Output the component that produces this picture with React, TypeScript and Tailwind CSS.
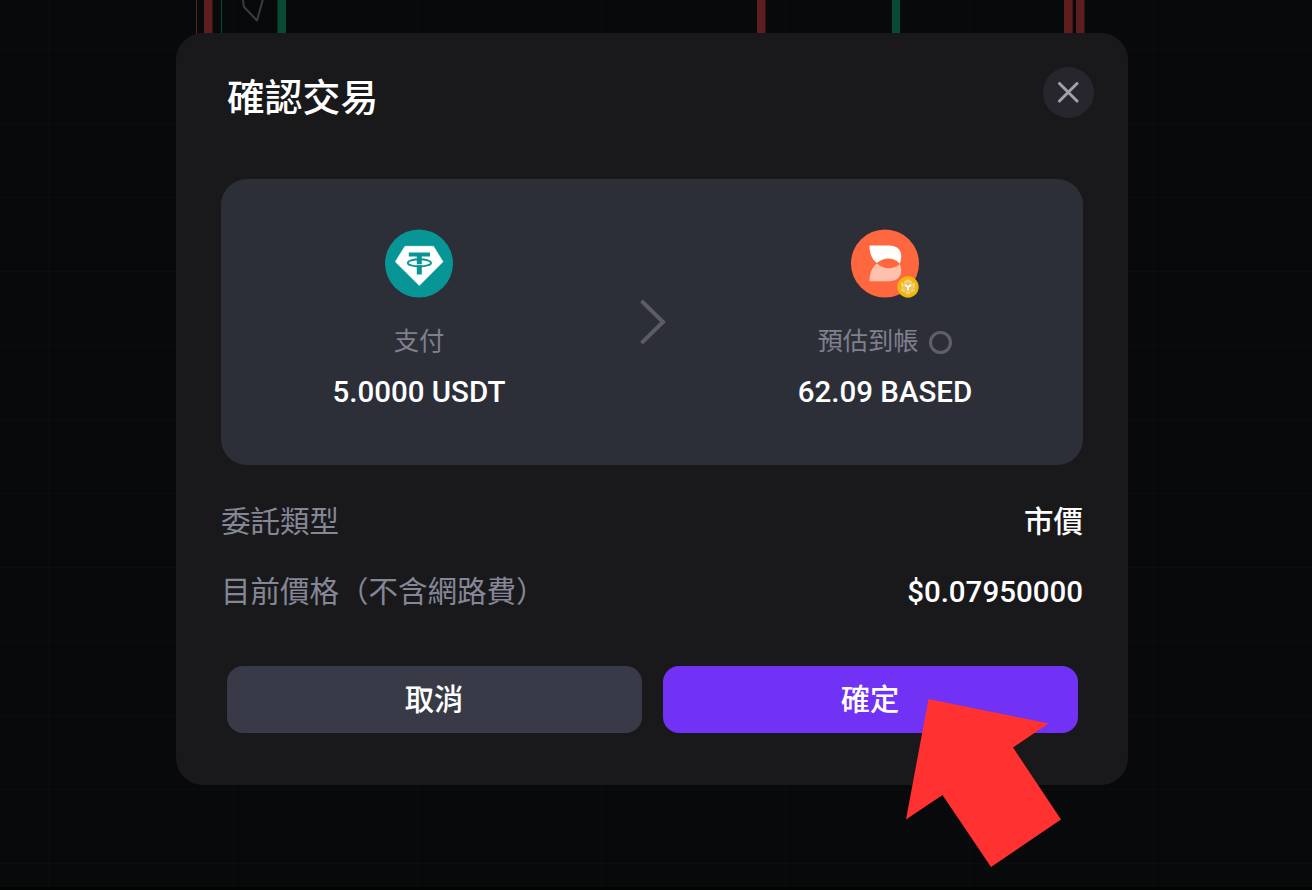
import type { ReactNode } from "react";

const verticalLines = [48, 233, 417, 601, 785, 969, 1153];
const horizontalLines = [49, 123, 197, 271, 345, 419, 493, 567, 641, 715, 789, 863];

function ChartBackdrop() {
  return (
    <svg className="absolute inset-0" width="1312" height="890" viewBox="0 0 1312 890" aria-hidden="true">
      <g fill="#0b0d0f">
        {verticalLines.map((x) => (
          <rect key={x} x={x} y="0" width="1" height="887" />
        ))}
        {horizontalLines.map((y) => (
          <rect key={y} x="0" y={y} width="1312" height="1" />
        ))}
      </g>
      <rect x="0" y="887" width="1312" height="3" fill="#020303" />
      <g fill="#5e1d1e">
        <rect x="196" y="0" width="1" height="60" />
        <rect x="204" y="0" width="8.5" height="60" />
        <rect x="757" y="0" width="8.5" height="60" />
        <rect x="1064" y="0" width="8.7" height="60" />
        <rect x="1076" y="0" width="8.5" height="60" />
      </g>
      <g fill="#074b34">
        <rect x="221" y="0" width="1" height="60" />
        <rect x="277.5" y="0" width="8.5" height="60" />
        <rect x="892" y="0" width="8" height="60" />
      </g>
      <path d="M242.5 -3 L244 7 L257 20.5 L263 -1" fill="none" stroke="#3a3b45" strokeWidth="2" strokeLinejoin="round" />
    </svg>
  );
}

function TetherIcon() {
  return (
    <svg width="68" height="69" viewBox="0 -0.5 68 69" aria-hidden="true">
      <circle cx="34" cy="34" r="34" fill="#079595" />
      <path d="M20 16.8 H48.5 L58 32.2 L34.3 56 L10.3 32.2 Z" fill="#fff" strokeLinejoin="round" stroke="#fff" strokeWidth="0.6" />
      <path d="M23.8 23 H45 V27 H36.8 V45 H31.8 V27 H23.8 Z" fill="#079595" />
      <ellipse cx="34.4" cy="33.4" rx="11.6" ry="3.6" fill="none" stroke="#079595" strokeWidth="1.9" />
      <path d="M31.8 35.1 H36.8" stroke="#fff" strokeWidth="0.8" />
    </svg>
  );
}

function BasedIcon() {
  return (
    <svg width="68" height="69" viewBox="0 -0.5 68 69" aria-hidden="true">
      <circle cx="34" cy="34" r="34" fill="#ff683e" />
      <path d="M18.5 16 H38 C45.5 16 50.5 20 50.2 27 C50 30 49.5 32.2 48.8 34.2 C43 27.5 32.5 27.5 26 33.6 C21 30 18.5 24 18.5 16 Z" fill="#fff" />
      <path d="M18.5 51.8 C18.5 44 21 37.5 26 34 C32.5 40.2 42.5 40.2 48.8 34.4 C49.8 36.5 50.2 39 50.2 41.5 C50 48 45.5 51.8 38 51.8 Z" fill="#ffc1ae" />
    </svg>
  );
}

function NetworkBadge() {
  return (
    <svg className="absolute left-[46px] top-[47px]" width="22" height="22" viewBox="0 0 22 22" aria-hidden="true">
      <circle cx="11" cy="11" r="10.7" fill="#edb70d" />
      <path d="M11 4.6 L16.7 7.8 V14.2 L11 17.4 L5.3 14.2 V7.8 Z" fill="#f3c04f" stroke="#f8cd82" strokeWidth="2.4" strokeDasharray="4.6 1.2" />
      <path d="M7.8 8.8 L11 11 L14.2 8.8 M11 11 V14.2" fill="none" stroke="#fff" strokeWidth="2" />
    </svg>
  );
}

function Asset({ icon, label, amount }: { icon: ReactNode; label: ReactNode; amount: string }) {
  return (
    <div className="flex w-[396px] flex-col items-center pt-[50.5px]">
      <div className="relative h-[68px] w-[68px]">{icon}</div>
      <div className="mt-[25.5px] flex h-[38px] items-center text-[25.3px] leading-[38px] text-[#7f808e]">{label}</div>
      <div className="mt-[9px] whitespace-nowrap text-[29.5px] font-medium leading-[44px] text-white">{amount}</div>
    </div>
  );
}

function DetailRow({ label, value }: { label: string; value: string }) {
  return (
    <div className="flex h-[44px] items-center justify-between text-[29.5px] leading-[44px]">
      <span className="text-[#858796]">{label}</span>
      <span className="font-medium text-white">{value}</span>
    </div>
  );
}

export default function App() {
  return (
    <div className="relative flex h-[890px] w-[1312px] items-start overflow-hidden bg-[#08090b] pl-[176px] pt-[33px] font-[Roboto,'Noto_Sans_CJK_TC',sans-serif]">
      <ChartBackdrop />
      <main className="relative flex h-[752px] w-[952px] flex-col rounded-[27px] bg-[#19191b] px-[45px]">
        <header className="flex h-[145.5px] items-start justify-between pl-[6px]">
          <h1 className="mt-[37px] text-[37.8px] font-medium leading-[56px] text-white">確認交易</h1>
          <button aria-label="關閉" className="-mr-[11px] mt-[34px] flex h-[51px] w-[51px] items-center justify-center rounded-full bg-[#26262c]">
            <svg width="21" height="21" viewBox="0 0 21 21" aria-hidden="true">
              <path d="M1.5 1.5 L19 19 M19 1.5 L1.5 19" stroke="#a0a1ac" strokeWidth="3" strokeLinecap="round" />
            </svg>
          </button>
        </header>

        <section className="flex h-[286.5px] w-[862px] justify-between rounded-[26px] bg-[#2d2f38]">
          <Asset icon={<TetherIcon />} label="支付" amount="5.0000 USDT" />
          <svg className="mt-[119px]" width="28" height="48" viewBox="0 0 28 48" aria-hidden="true">
            <path d="M3.5 2.8 L25 24 L3.5 45.2" fill="none" stroke="#5b5c68" strokeWidth="4" />
          </svg>
          <Asset
            icon={
              <>
                <BasedIcon />
                <NetworkBadge />
              </>
            }
            label={
              <>
                預估到帳
                <span className="ml-[10px] mr-[1px] mt-[2px] h-[23px] w-[23px] rounded-full border-[3px] border-[#5e5f6b]" />
              </>
            }
            amount="62.09 BASED"
          />
        </section>

        <section className="mt-[35px] flex flex-col gap-[26px]">
          <DetailRow label="委託類型" value="市價" />
          <DetailRow label="目前價格（不含網路費）" value="$0.07950000" />
        </section>

        <footer className="mt-[51.5px] flex gap-[21px] px-[5.5px] text-[29.3px] font-medium leading-[44px] text-white">
          <button className="flex h-[67.5px] flex-1 items-center justify-center rounded-[16px] bg-[#393a47] pt-[1px]">取消</button>
          <button className="flex h-[67.5px] flex-1 items-center justify-center rounded-[16px] bg-[#7132f5] pt-[1px]">確定</button>
        </footer>
      </main>
      <svg className="absolute left-[900px] top-[690px]" width="170" height="180" viewBox="900 690 170 180" aria-hidden="true">
        <path d="M928.5 699 L1048.5 723.5 L1013 747.5 L1061 819.5 L991 867 L942.5 795 L906 819.5 Z" fill="#ff3131" />
      </svg>
    </div>
  );
}
